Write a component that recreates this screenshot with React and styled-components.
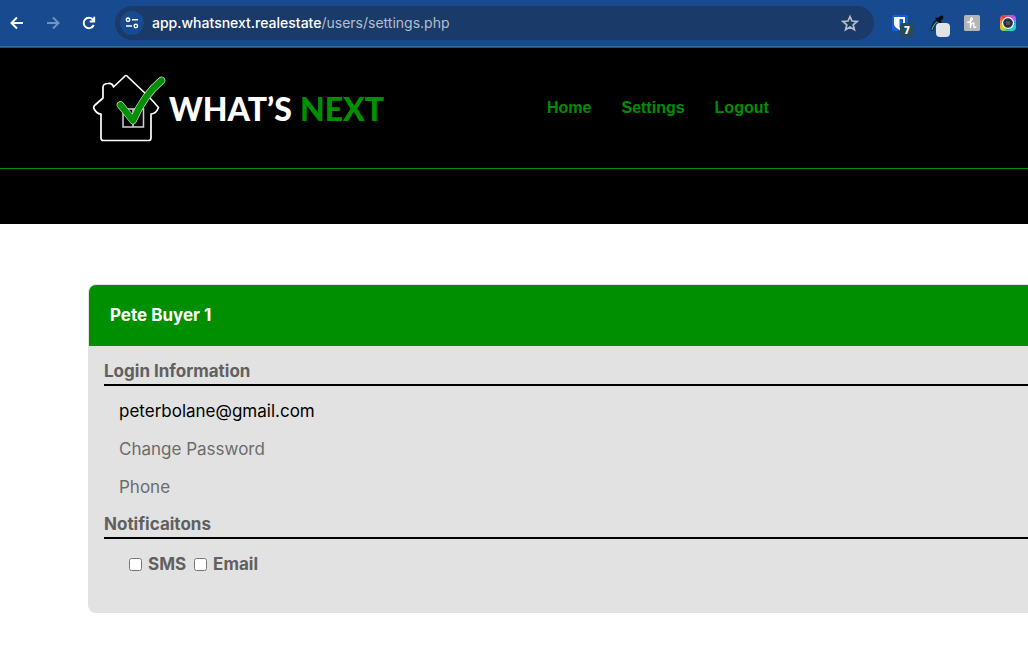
import React from "react";
import styled, { createGlobalStyle } from "styled-components";

const GREEN = "#008f00";

const GlobalStyle = createGlobalStyle`
  *, *::before, *::after { box-sizing: border-box; }
  html { overflow-x: hidden; }
  body {
    margin: 0;
    background: #fff;
    color: #000;
    font: 400 17px/24px Inter, "Open Sans", sans-serif;
  }
`;

const Toolbar = styled.header`
  display: flex;
  align-items: center;
  height: 48px;
  padding: 0 8px 2px 4px;
  background: #174a8f;
  border-bottom: 1px solid #0b6b35;
  box-shadow: inset 0 -1px #3c68a5;
`;

const ToolButton = styled.button`
  display: grid;
  place-items: center;
  flex: none;
  width: 26px;
  height: 26px;
  margin-right: 10px;
  padding: 0;
  border: 0;
  background: none;
  color: ${(p) => (p.$dim ? "#6f93c2" : "#fff")};
`;

const AddressBar = styled.div`
  display: flex;
  align-items: center;
  flex: 1;
  min-width: 0;
  height: 34px;
  margin-left: 3px;
  padding: 0 12px 0 5px;
  border-radius: 17px;
  background: #1a3b69;
`;

const SiteButton = styled.button`
  display: grid;
  place-items: center;
  flex: none;
  width: 24px;
  height: 24px;
  padding: 0;
  border: 0;
  border-radius: 50%;
  background: #174a8f;
`;

const Address = styled.div`
  flex: 1;
  min-width: 0;
  margin-left: 8px;
  overflow: hidden;
  white-space: nowrap;
  color: #b4bfce;
  font: 400 14px/20px Inter, sans-serif;
`;

const Host = styled.span`
  color: #fff;
  font-weight: 500;
`;

const StarButton = styled(ToolButton)`
  width: 24px;
  margin: 0;
  color: #b9bdc4;
`;

const Extensions = styled.div`
  display: flex;
  align-items: center;
  gap: 12px;
  margin-left: 14px;
`;

const ExtensionButton = styled(ToolButton)`
  width: 24px;
  height: 28px;
  margin: 0;
  justify-content: center;
`;

const Masthead = styled.div`
  height: 176px;
  background: #000;
`;

const NavBar = styled.div`
  display: flex;
  align-items: center;
  height: 121px;
  padding: 0 24px 0 92px;
  border-bottom: 1px solid ${GREEN};
`;

const Brand = styled.a`
  display: flex;
  align-items: center;
  flex: none;
  width: 290px;
  color: #fff;
  text-decoration: none;
`;

const BrandName = styled.span`
  display: flex;
  gap: 8px;
  margin-left: 3px;
  padding-top: 2px;
  white-space: nowrap;
  font: 900 32px/40px Lato, sans-serif;
`;

const BrandAccent = styled.span`
  color: ${GREEN};
`;

const Nav = styled.nav`
  display: flex;
  gap: 30px;
  margin-left: 165px;
`;

const NavLink = styled.a`
  color: ${GREEN};
  text-decoration: none;
  font: 700 16px/24px "Liberation Sans", Arial, sans-serif;
`;

const Card = styled.main`
  margin: 60px 0 35px 88px;
  padding-bottom: 30px;
  border: solid #e2e2e2;
  border-width: 1px 0 0 1px;
  border-radius: 8px 0 0 8px;
  background: #e2e2e2;
`;

const CardTitle = styled.h1`
  margin: 0;
  padding: 18px 21px 19px;
  border-radius: 7px 0 0 0;
  background: ${GREEN};
  color: #fff;
  font-size: 17px;
  font-weight: 700;
  line-height: 24px;
`;

const Section = styled.section`
  margin-left: 15px;
  padding-top: ${(p) => (p.$first ? 13 : 6)}px;
`;

const SectionTitle = styled.h2`
  margin: 0 0 6px;
  padding-bottom: 1px;
  border-bottom: 2px solid #000;
  color: #606060;
  font-size: 17px;
  font-weight: 700;
  line-height: 24px;
`;

const Row = styled.div`
  display: flex;
  align-items: center;
  height: 38px;
  padding-left: ${(p) => (p.$inset ? 25 : 15)}px;
`;

const RowLink = styled.a`
  color: ${(p) => (p.$muted ? "#6c6c6c" : "#000")};
  text-decoration: none;
`;

const CheckLabel = styled.label`
  display: flex;
  align-items: center;
  gap: 6px;
  margin-right: 8px;
  color: #606060;
  font-weight: 700;
`;

const Checkbox = styled.input`
  width: 13px;
  height: 13px;
  margin: 0;
`;

const stroke = { fill: "none", stroke: "currentColor", strokeWidth: 2 };

const BackIcon = () => (
  <svg width="14" height="14" viewBox="0 0 14 14" {...stroke}><path d="M13 7H2M7 1.500 1.500 7 7 12.500" /></svg>
);
const ForwardIcon = () => (
  <svg width="14" height="14" viewBox="0 0 14 14" {...stroke}><path d="M1 7h11M7 1.500 12.500 7 7 12.500" /></svg>
);
const ReloadIcon = () => (
  <svg width="14" height="14" viewBox="0 0 14 14" {...stroke}><path d="M11.700 9A5.200 5.200 0 1 1 10.800 3.500L12 5M12.200.8V5.400H7.700" /></svg>
);
const TuneIcon = () => (
  <svg width="14" height="12" viewBox="0 0 14 12" fill="none" stroke="#fff" strokeWidth="1.500">
    <circle cx="3" cy="2.700" r="1.700" /><path d="M7 2.700h6M1 9h6" /><circle cx="10.800" cy="9" r="1.700" />
  </svg>
);
const StarIcon = () => (
  <svg width="18" height="18" viewBox="0 0 18 18" fill="none" stroke="currentColor" strokeWidth="1.700">
    <path d="m9 2.500 2 4.500 5 .5-3.800 3.300 1.200 4.900L9 13.100l-4.400 2.600 1.200-4.900L2 7.500 7 7Z" />
  </svg>
);
const ShieldIcon = () => (
  <svg width="28" height="28" viewBox="-4 0 28 28">
    <rect x="2" y="6" width="16" height="16" rx="2" fill="#175ddc" />
    <path d="M4 8h11v6.500c0 3-2.500 4.800-5.500 6.500C6.500 19.300 4 17.500 4 14.500Z" fill="#fff" />
    <path d="M9.500 10H13v4.500c0 1.700-1.500 3-3.500 4.200Z" fill="#175ddc" />
    <rect x="10" y="14" width="14" height="14" rx="4" fill="#294a59" />
    <text x="17" y="24.500" textAnchor="middle" fill="#fff" fontFamily="Open Sans, sans-serif" fontSize="10" fontWeight="800">7</text>
  </svg>
);
const PickerIcon = () => (
  <svg width="28" height="28" viewBox="-4 0 28 28">
    <path d="M13 10.500C9.500 12 7.500 15 6 20.500" fill="none" stroke="#0b1c30" strokeWidth="3" strokeLinecap="round" />
    <path d="M11 13C8.500 14.500 7.200 17 6 20.500" fill="none" stroke="#5aa084" strokeWidth="1.200" strokeLinecap="round" />
    <path d="M10.500 9.500 14.500 13" fill="none" stroke="#050b16" strokeWidth="2" strokeLinecap="round" />
    <path d="M13 10.500 15.500 8.500" fill="none" stroke="#050b16" strokeWidth="4" strokeLinecap="round" />
    <rect x="10" y="14" width="14" height="14" rx="4" fill="#e1e3e5" />
  </svg>
);
const HoneyIcon = () => (
  <svg width="16" height="16" viewBox="0 0 16 16">
    <rect width="16" height="16" rx="1.500" fill="#b5b5b5" />
    <path d="M3.500 7.300C6.500 7 9.200 4.800 8.300 3.300c-.8-1-1.900.4-1.900 2.700v6.500C6.800 9.500 8 7.800 9.300 7.800c1.500 0 .2 2.700.5 4 .3 1 1.200.8 2 .1" fill="none" stroke="#fff" strokeWidth="1.300" strokeLinecap="round" strokeLinejoin="round" />
  </svg>
);
const LensFrame = styled.span`
  display: grid;
  place-items: center;
  width: 16px;
  height: 16px;
  border-radius: 4px;
  background: conic-gradient(from 0deg, #ff3d6e, #c14cff 35deg, #3f9cff 85deg, #14d4e8 130deg, #25d67c 190deg, #e2d21c 225deg, #ff981d 270deg, #fc3154 320deg, #ff3d6e);
`;
const LensIcon = () => (
  <LensFrame>
    <svg width="14" height="14" viewBox="0 0 14 14">
      <circle cx="7" cy="7" r="5.500" fill="#2c3340" stroke="#fff" strokeWidth="1.300" />
      <circle cx="7" cy="7" r="3" fill="#4b5361" stroke="#1e2530" />
    </svg>
  </LensFrame>
);

const HouseMark = styled.svg`
  flex: none;
  width: 74px;
  height: 70px;
`;

const HouseLogo = () => (
  <HouseMark viewBox="0 0 74 70" fill="none" strokeLinejoin="round" strokeLinecap="round" aria-hidden="true">
    <path d="M9 41V65q0 2.500 2.500 2.500H56.500q2.500 0 2.500-2.500V41q5 0 7.500-6.500Q61 28 56 23L36 4q-2-3-4 0L21.500 14q-1-4-5.500-3.500-5 0-5 4V25L2.500 32.500q-1.500 2 0 4Q5 41 9 41Z" stroke="#fff" strokeWidth="1.700" />
    <path d="M31 36h20.500v18H31ZM41 36v18" stroke="#d1d1d1" strokeWidth="1.500" strokeLinejoin="miter" />
    <path d="M28.500 32 41 47.500Q52 22 69.500 7.500" stroke="#d8ead8" strokeWidth="7.500" />
    <path d="M28.500 32 41 47.500Q52 22 69.500 7.500" stroke={GREEN} strokeWidth="6.300" />
  </HouseMark>
);

const navItems = ["Home", "Settings", "Logout"];
const loginItems = [
  { text: "peterbolane@gmail.com" },
  { text: "Change Password", muted: true },
  { text: "Phone", muted: true },
];
const channels = ["SMS", "Email"];
const extensions = [
  { name: "Password manager", Icon: ShieldIcon },
  { name: "Color picker", Icon: PickerIcon },
  { name: "Coupons", Icon: HoneyIcon },
  { name: "Screen capture", Icon: LensIcon },
];

export default function App() {
  return (
    <>
      <GlobalStyle />
      <Toolbar>
        <ToolButton aria-label="Back"><BackIcon /></ToolButton>
        <ToolButton aria-label="Forward" $dim><ForwardIcon /></ToolButton>
        <ToolButton aria-label="Reload"><ReloadIcon /></ToolButton>
        <AddressBar>
          <SiteButton aria-label="Site information"><TuneIcon /></SiteButton>
          <Address role="textbox" aria-label="Address" contentEditable suppressContentEditableWarning spellCheck={false}>
            <Host>app.whatsnext.realestate</Host>/users/settings.php
          </Address>
          <StarButton aria-label="Bookmark"><StarIcon /></StarButton>
        </AddressBar>
        <Extensions>
          {extensions.map(({ name, Icon }) => (
            <ExtensionButton key={name} aria-label={name}><Icon /></ExtensionButton>
          ))}
        </Extensions>
      </Toolbar>
      <Masthead>
        <NavBar>
          <Brand href="#">
            <HouseLogo />
            <BrandName>WHAT’S <BrandAccent>NEXT</BrandAccent></BrandName>
          </Brand>
          <Nav>
            {navItems.map((item) => <NavLink key={item} href="#">{item}</NavLink>)}
          </Nav>
        </NavBar>
      </Masthead>
      <Card>
        <CardTitle>Pete Buyer 1</CardTitle>
        <Section $first>
          <SectionTitle>Login Information</SectionTitle>
          {loginItems.map(({ text, muted }) => (
            <Row key={text}><RowLink href="#" $muted={muted}>{text}</RowLink></Row>
          ))}
        </Section>
        <Section>
          <SectionTitle>Notificaitons</SectionTitle>
          <Row $inset>
            {channels.map((name) => (
              <CheckLabel key={name}><Checkbox type="checkbox" />{name}</CheckLabel>
            ))}
          </Row>
        </Section>
      </Card>
    </>
  );
}
